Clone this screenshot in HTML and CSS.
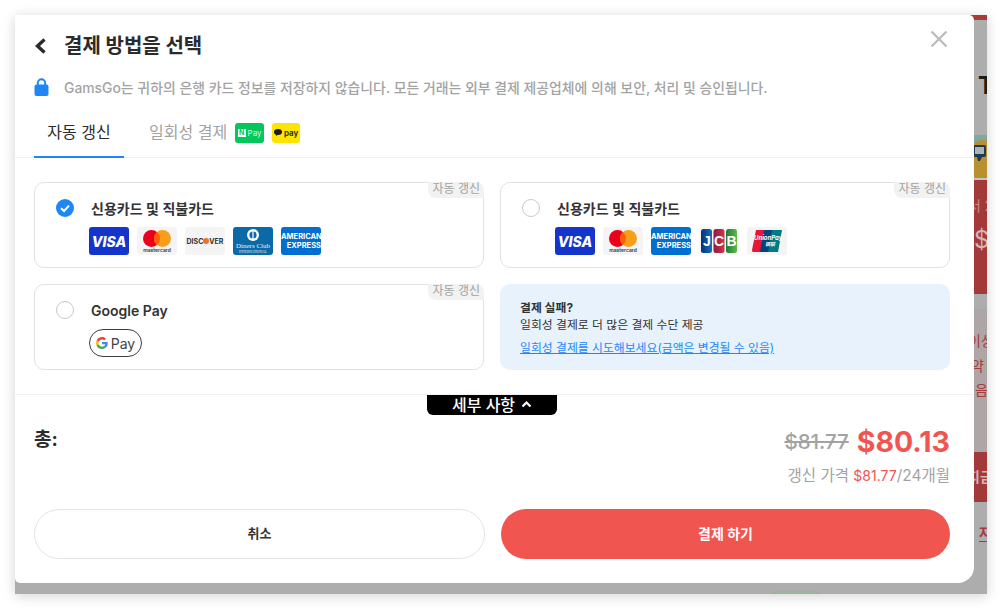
FILE: index.html
```html
<!DOCTYPE html>
<html lang="ko">
<head>
  <meta charset="UTF-8">
  <title>결제 방법을 선택</title>
  <link rel="stylesheet" href="styles.css">
</head>
<body>

  <div class="tela">
    <div class="modal">

      <div class="cabecalho">
        <svg class="voltar" width="14" height="16" viewBox="0 0 14 16"><path d="M11.500 1.500 L4.500 8 L11.500 14.500" fill="none" stroke="#2b2b2b" stroke-width="3.4"/></svg>
        <h1>결제 방법을 선택</h1>
        <svg class="fechar" width="18" height="18" viewBox="0 0 18 18"><path d="M1.500 1.500 L16.500 16.500 M16.500 1.500 L1.500 16.500" stroke="#bdbdbd" stroke-width="2.400"/></svg>
      </div>

      <div class="aviso">
        <svg width="15" height="18" viewBox="0 0 15 18"><path d="M3.800 8 V5 a3.700 3.700 0 0 1 7.400 0 V8" fill="none" stroke="#1f87f5" stroke-width="2"/><rect x="0.500" y="6.500" width="14" height="11.500" rx="2" fill="#1f87f5"/></svg>
        <p>GamsGo는 귀하의 은행 카드 정보를 저장하지 않습니다. 모든 거래는 외부 결제 제공업체에 의해 보안, 처리 및 승인됩니다.</p>
      </div>

      <div class="abas">
        <div class="aba ativa">자동 갱신</div>
        <div class="aba">일회성 결제</div>
        <div class="selo selo-naver"><span class="selo-n">N</span>Pay</div>
        <div class="selo selo-kakao"><svg width="8" height="7" viewBox="0 0 8 7"><ellipse cx="4" cy="3" rx="4" ry="3" fill="#1a1a1a"/><path d="M2 5 L2 7 L4 5.500Z" fill="#1a1a1a"/></svg>pay</div>
      </div>

      <div class="opcoes">

        <div class="opcao">
          <span class="tag">자동 갱신</span>
          <div class="opcao-topo">
            <svg class="radio" width="18" height="18" viewBox="0 0 18 18"><circle cx="9" cy="9" r="9" fill="#1f87f5"/><path d="M5 9.300 L8 12 L13 6.600" fill="none" stroke="#fff" stroke-width="2"/></svg>
            <strong>신용카드 및 직불카드</strong>
          </div>
          <div class="cartoes">
            <div class="cartao c-visa">VISA</div>
            <div class="cartao c-cinza">
              <svg width="28" height="17" viewBox="0 0 28 17"><circle cx="8.500" cy="8.500" r="8.500" fill="#eb001b"/><circle cx="19.500" cy="8.500" r="8.500" fill="#f79e1b"/><path d="M14 2 a8.500 8.500 0 0 1 0 13 a8.500 8.500 0 0 1 0 -13Z" fill="#ff5f00"/></svg>
              <span class="mc-nome">mastercard</span>
            </div>
            <div class="cartao c-cinza c-discover">DISC<i></i>VER</div>
            <div class="cartao c-diners">
              <svg width="14" height="12" viewBox="0 0 14 12"><circle cx="7" cy="6" r="6" fill="#fff"/><circle cx="7" cy="6" r="3.600" fill="#0a6aa8"/><rect x="6.400" y="1" width="1.200" height="10" fill="#fff"/></svg>
              <span class="diners-nome">Diners Club</span>
              <span class="diners-sub">INTERNATIONAL</span>
            </div>
            <div class="cartao c-amex"><span>AMERICAN</span><span class="amex-2">EXPRESS</span></div>
          </div>
        </div>

        <div class="opcao">
          <span class="tag">자동 갱신</span>
          <div class="opcao-topo">
            <span class="radio radio-vazio"></span>
            <strong>신용카드 및 직불카드</strong>
          </div>
          <div class="cartoes">
            <div class="cartao c-visa">VISA</div>
            <div class="cartao c-cinza">
              <svg width="28" height="17" viewBox="0 0 28 17"><circle cx="8.500" cy="8.500" r="8.500" fill="#eb001b"/><circle cx="19.500" cy="8.500" r="8.500" fill="#f79e1b"/><path d="M14 2 a8.500 8.500 0 0 1 0 13 a8.500 8.500 0 0 1 0 -13Z" fill="#ff5f00"/></svg>
              <span class="mc-nome">mastercard</span>
            </div>
            <div class="cartao c-amex"><span>AMERICAN</span><span class="amex-2">EXPRESS</span></div>
            <div class="cartao c-jcb">
              <svg width="36" height="24" viewBox="0 0 36 24">
                <defs>
                  <linearGradient id="jcb-a"><stop offset="0" stop-color="#0a2f7d"/><stop offset="1" stop-color="#1273b8"/></linearGradient>
                  <linearGradient id="jcb-b"><stop offset="0" stop-color="#8a1c3c"/><stop offset="1" stop-color="#d8324a"/></linearGradient>
                  <linearGradient id="jcb-c"><stop offset="0" stop-color="#1a7d3a"/><stop offset="1" stop-color="#62b846"/></linearGradient>
                </defs>
                <rect x="0" y="0" width="11" height="24" rx="2.500" fill="url(#jcb-a)"/>
                <rect x="12.500" y="0" width="11" height="24" rx="2.500" fill="url(#jcb-b)"/>
                <rect x="25" y="0" width="11" height="24" rx="2.500" fill="url(#jcb-c)"/>
                <g class="jcb-letras">
                  <text x="6" y="17">J</text>
                  <text x="18" y="17">C</text>
                  <text x="30.500" y="17">B</text>
                </g>
              </svg>
            </div>
            <div class="cartao c-cinza c-union">
              <svg width="30" height="22" viewBox="0 0 30 22">
                <path d="M4 0 H14 L10 22 H1 Q0 22 0 20Z" fill="#e21836"/>
                <path d="M12 0 H22 L18 22 H8Z" fill="#00447c"/>
                <path d="M20 0 H30 L26 22 H16Z" fill="#007b84"/>
              </svg>
              <span class="union-nome">UnionPay</span>
              <span class="union-sub">银联</span>
            </div>
          </div>
        </div>

        <div class="opcao">
          <span class="tag">자동 갱신</span>
          <div class="opcao-topo">
            <span class="radio radio-vazio"></span>
            <strong>Google Pay</strong>
          </div>
          <div class="cartoes">
            <div class="gpay">
              <svg width="12" height="12" viewBox="0 0 48 48">
                <path fill="#ea4335" d="M24 9.500c3.500 0 6.700 1.200 9.200 3.600l6.800-6.800C35.900 2.400 30.500 0 24 0 14.600 0 6.500 5.400 2.600 13.200l8 6.200C12.400 13.700 17.700 9.500 24 9.500z"/>
                <path fill="#4285f4" d="M47 24.500c0-1.600-.2-3.100-.4-4.500H24v9h13c-.6 3-2.300 5.500-4.900 7.200l7.700 6C44.300 37.900 47 31.800 47 24.500z"/>
                <path fill="#fbbc05" d="M10.500 28.600c-.5-1.400-.8-3-.8-4.600s.3-3.200.8-4.600l-8-6.200C.9 16.500 0 20.100 0 24s.9 7.500 2.600 10.800l7.900-6.200z"/>
                <path fill="#34a853" d="M24 48c6.500 0 11.900-2.100 15.900-5.800l-7.700-6c-2.200 1.400-4.900 2.300-8.200 2.300-6.300 0-11.600-4.200-13.500-9.900l-8 6.200C6.500 42.600 14.600 48 24 48z"/>
              </svg>
              <span>Pay</span>
            </div>
          </div>
        </div>

        <div class="ajuda">
          <strong>결제 실패?</strong>
          <span>일회성 결제로 더 많은 결제 수단 제공</span>
          <a href="#">일회성 결제를 시도해보세요(금액은 변경될 수 있음)</a>
        </div>

      </div>

      <div class="rodape">
        <div class="detalhes">세부 사항
          <svg width="11" height="8" viewBox="0 0 11 8"><path d="M1.500 6.500 L5.500 2.500 L9.500 6.500" fill="none" stroke="#fff" stroke-width="2.200"/></svg>
        </div>

        <div class="total">
          <span class="total-label">총:</span>
          <div class="precos">
            <div class="preco-linha">
              <s class="preco-velho">$81.77</s>
              <span class="preco-novo">$80.13</span>
            </div>
            <div class="renovacao">갱신 가격 <em>$81.77</em>/24개월</div>
          </div>
        </div>

        <div class="botoes">
          <button class="btn btn-cancelar">취소</button>
          <button class="btn btn-pagar">결제 하기</button>
        </div>
      </div>

    </div>

    <!-- pedaco da pagina atras do modal -->
    <div class="fundo">
      <div class="f-topo"></div>
      <div class="f-cinza"><b>T</b></div>
      <div class="f-imagem">
        <svg width="21" height="44" viewBox="0 0 21 44">
          <rect width="21" height="44" fill="#b8902f"/>
          <path d="M8 0 H21 V6 Q14 3 8 9Z" fill="#7fa8a0"/>
          <rect x="7" y="10" width="13" height="12" rx="2" fill="#1f3a4d"/>
          <rect x="9" y="12" width="9" height="7" fill="#a9b4bb"/>
          <path d="M11 22 H16 L14 26 H12Z" fill="#1f3a4d"/>
        </svg>
      </div>
      <div class="f-vermelho">
        <span class="f-txt1">서 2</span>
        <span class="f-cifrao">$</span>
      </div>
      <div class="f-faixa"></div>
      <div class="f-claro">
        <span>이상</span>
        <span class="f-claro-2">약</span>
        <span class="f-claro-3">음</span>
      </div>
      <div class="f-botao">지금</div>
      <div class="f-link"><span>자</span></div>
    </div>

    <div class="f-verde"></div>
  </div>

</body>
</html>
```

FILE: styles.css
```css
* {
  box-sizing: border-box;
}

body {
  margin: 0;
  padding: 15px 15px 16px;
  background-color: #fff;
  font-family: Inter, "Noto Sans CJK KR", sans-serif;
  color: #2b2b2b;
  overflow: hidden;
}

.tela {
  position: relative;
  display: flex;
  align-items: flex-start;
  width: 972px;
  height: 579px;
  background-color: #adadad;
  box-shadow: 0 2px 12px rgba(0, 0, 0, 0.18);
  overflow: hidden;
}

.modal {
  position: relative;
  z-index: 1;
  width: 959px;
  height: 568px;
  flex-shrink: 0;
  background-color: #fff;
  border-radius: 0 5px 16px 5px;
  display: flex;
  flex-direction: column;
}

.cabecalho {
  display: flex;
  align-items: center;
  padding: 13px 26px 0 18px;
  height: 48px;
}

.cabecalho h1 {
  margin: 0 0 0 17px;
  font-size: 20px;
  font-weight: 700;
  line-height: 30px;
}

.fechar {
  margin-left: auto;
  margin-top: -13px;
}

.aviso {
  display: flex;
  align-items: center;
  gap: 15px;
  margin-top: 15px;
  padding-left: 19px;
  height: 18px;
}

.aviso p {
  margin: 0;
  font-size: 13.900px;
  font-weight: 500;
  color: #a3a3a3;
  white-space: nowrap;
}

.abas {
  display: flex;
  align-items: center;
  padding-left: 19px;
  margin-top: 12px;
  height: 50px;
  border-bottom: 1px solid #f0f0f0;
}

.aba {
  font-size: 16px;
  color: #a3a3a3;
  padding-right: 8px;
  line-height: 49px;
}

.aba.ativa {
  width: 90px;
  margin-right: 25px;
  padding: 0;
  text-align: center;
  color: #2b2b2b;
  height: 50px;
  border-bottom: 2px solid #1f87f5;
}

.selo {
  height: 20px;
  border-radius: 3px;
  display: flex;
  align-items: center;
  justify-content: center;
  gap: 2px;
  font-size: 8px;
}

.selo-naver {
  width: 29px;
  background-color: #03c75a;
  color: #d8f7e4;
  margin-right: 8px;
}

.selo-n {
  width: 8px;
  height: 8px;
  background-color: #fff;
  color: #03c75a;
  font-size: 7px;
  font-weight: 700;
  line-height: 8px;
  text-align: center;
}

.selo-kakao {
  width: 28px;
  background-color: #fee500;
  color: #1a1a1a;
  font-weight: 600;
}

.opcoes {
  display: grid;
  grid-template-columns: 450px 450px;
  grid-auto-rows: 86px;
  column-gap: 16px;
  row-gap: 16px;
  padding: 24px 0 0 19px;
  height: 237px;
  border-bottom: 1px solid #f5eff1;
}

.opcao {
  position: relative;
  border: 1px solid #e2e2e2;
  border-radius: 10px;
  padding: 16px 0 0 21px;
}

.tag {
  position: absolute;
  top: -1px;
  right: -1px;
  padding: 0 4px;
  height: 16px;
  background-color: #f2f2f2;
  border-radius: 0 8px 0 8px;
  font-size: 12px;
  line-height: 14px;
  color: #a3a3a3;
}

.opcao-topo {
  display: flex;
  align-items: center;
  height: 18px;
}

.opcao-topo strong {
  margin-left: 17px;
  font-size: 14px;
  font-weight: 600;
  color: #333;
}

.radio {
  flex-shrink: 0;
}

.radio-vazio {
  width: 18px;
  height: 18px;
  border: 1.500px solid #c9c9c9;
  border-radius: 50%;
}

.cartoes {
  display: flex;
  gap: 8px;
  margin: 10px 0 0 33px;
}

.cartao {
  position: relative;
  width: 40px;
  height: 28px;
  border-radius: 3px;
  overflow: hidden;
  display: flex;
  flex-direction: column;
  align-items: center;
  justify-content: center;
}

.c-visa {
  background-color: #1434cb;
  color: #fff;
  font-size: 14px;
  font-weight: 800;
  font-style: italic;
}

.c-cinza {
  background-color: #f4f4f4;
}

.mc-nome {
  font-size: 5px;
  line-height: 6px;
  color: #333;
  font-weight: 600;
}

.c-discover {
  flex-direction: row;
  font-size: 7px;
  font-weight: 700;
  color: #333;
}

.c-discover i {
  width: 6px;
  height: 6px;
  border-radius: 50%;
  background-color: #f26e21;
}

.c-diners {
  background-color: #0a6aa8;
  color: #e6f0f7;
  font-family: "Liberation Serif", serif;
}

.diners-nome {
  font-size: 7px;
  line-height: 7px;
  margin-top: 2px;
}

.diners-sub {
  font-size: 3.500px;
  line-height: 4px;
}

.c-amex {
  background-color: #016fd0;
  color: #fff;
  font-size: 7.500px;
  font-weight: 700;
  line-height: 9px;
  align-items: flex-start;
  white-space: nowrap;
}

.amex-2 {
  align-self: flex-end;
}

.c-jcb {
  background-color: #f8f8f8;
}

.jcb-letras {
  fill: #fff;
  font-family: "Liberation Sans", sans-serif;
  font-size: 14px;
  font-weight: 700;
  text-anchor: middle;
}

.c-union svg {
  display: block;
}

.union-nome,
.union-sub {
  position: absolute;
  color: #fff;
  font-style: italic;
  font-weight: 700;
}

.union-nome {
  top: 8px;
  left: 7px;
  font-size: 6px;
  line-height: 6px;
}

.union-sub {
  top: 14px;
  left: 18px;
  font-size: 5px;
  line-height: 6px;
}

.gpay {
  display: flex;
  align-items: center;
  justify-content: center;
  gap: 3px;
  width: 53px;
  height: 28px;
  border: 1px solid #3c3c3c;
  border-radius: 14px;
  font-size: 14px;
  color: #444;
}

.ajuda {
  background-color: #e7f2fd;
  border-radius: 10px;
  padding: 16px 20px;
  display: flex;
  flex-direction: column;
  font-size: 11.850px;
  line-height: 17px;
  color: #333;
}

.ajuda strong {
  font-weight: 700;
}

.ajuda a {
  margin-top: 6px;
  color: #1f87f5;
}

.rodape {
  position: relative;
  flex: 1;
  padding: 0 24px 0 19px;
}

.detalhes {
  position: absolute;
  top: 0;
  left: 412px;
  width: 130px;
  height: 20px;
  padding-bottom: 2px;
  background-color: #000;
  color: #fff;
  border-radius: 0 0 6px 6px;
  font-size: 16px;
  font-weight: 500;
  display: flex;
  align-items: center;
  justify-content: center;
  gap: 6px;
}

.total {
  display: flex;
  justify-content: space-between;
  padding-top: 29px;
  height: 114px;
}

.total-label {
  font-size: 19px;
  font-weight: 700;
  line-height: 31px;
}

.precos {
  text-align: right;
}

.preco-linha {
  display: flex;
  align-items: center;
  justify-content: flex-end;
  gap: 8px;
  height: 34px;
}

.preco-velho {
  font-size: 20.500px;
  font-weight: 500;
  color: #a3a3a3;
}

.preco-novo {
  font-size: 28.500px;
  font-weight: 700;
  color: #f05550;
}

.renovacao {
  margin-top: 7px;
  font-size: 15.500px;
  line-height: 22px;
  color: #a3a3a3;
}

.renovacao em {
  font-style: normal;
  font-size: 14px;
  color: #f05550;
}

.botoes {
  display: flex;
  gap: 16px;
}

.btn {
  flex: 1;
  height: 50px;
  padding: 0 0 3px;
  border-radius: 25px;
  font-family: inherit;
  font-size: 13px;
  font-weight: 700;
  cursor: pointer;
}

.btn-cancelar {
  background-color: #fff;
  border: 1px solid #e4e4e4;
  color: #333;
}

.btn-pagar {
  background-color: #f05550;
  border: none;
  color: #fff;
  font-size: 14px;
}

/* a pagina continua por baixo do modal, so a ponta aparece */
.fundo {
  width: 21px;
  height: 568px;
  margin-left: -8px;
  flex-shrink: 0;
  display: flex;
  flex-direction: column;
  overflow: hidden;
  white-space: nowrap;
  font-size: 14px;
}

.f-topo {
  height: 5px;
  flex-shrink: 0;
  background-color: #a83a3a;
}

.f-cinza {
  height: 115px;
  flex-shrink: 0;
  padding: 53px 0 0 12px;
  font-size: 24px;
  line-height: 26px;
  color: #1c1c1c;
}

.f-imagem {
  height: 45px;
  flex-shrink: 0;
  border-bottom: 2px solid #c9c4c0;
  overflow: hidden;
}

.f-imagem svg {
  display: block;
}

.f-vermelho {
  height: 114px;
  flex-shrink: 0;
  background-color: #a33a3a;
  color: #c98a8a;
  display: flex;
  flex-direction: column;
  padding: 15px 0 0 2px;
}

.f-cifrao {
  font-size: 24px;
  margin: 10px 0 0 6px;
  color: #d5b5b5;
}

.f-faixa {
  height: 15px;
  flex-shrink: 0;
}

.f-claro {
  height: 143px;
  flex-shrink: 0;
  background-color: #aea6a6;
  color: #a83a3a;
  display: flex;
  flex-direction: column;
  padding: 20px 0 0 2px;
  line-height: 24.500px;
}

.f-claro-2 {
  padding-left: 3px;
}

.f-claro-3 {
  padding-left: 7px;
}

.f-botao {
  height: 50px;
  flex-shrink: 0;
  background-color: #a33a3a;
  color: #d5b5b5;
  font-weight: 700;
  line-height: 50px;
  padding-left: 1px;
}

.f-link {
  padding: 20px 0 0 13px;
  color: #a83a3a;
  font-weight: 700;
}

.f-link span {
  border-bottom: 1px solid #a83a3a;
}

.f-verde {
  position: absolute;
  left: 757px;
  bottom: 0;
  width: 48px;
  height: 3px;
  background-color: #9ab59a;
  border-radius: 4px 4px 0 0;
}
```
